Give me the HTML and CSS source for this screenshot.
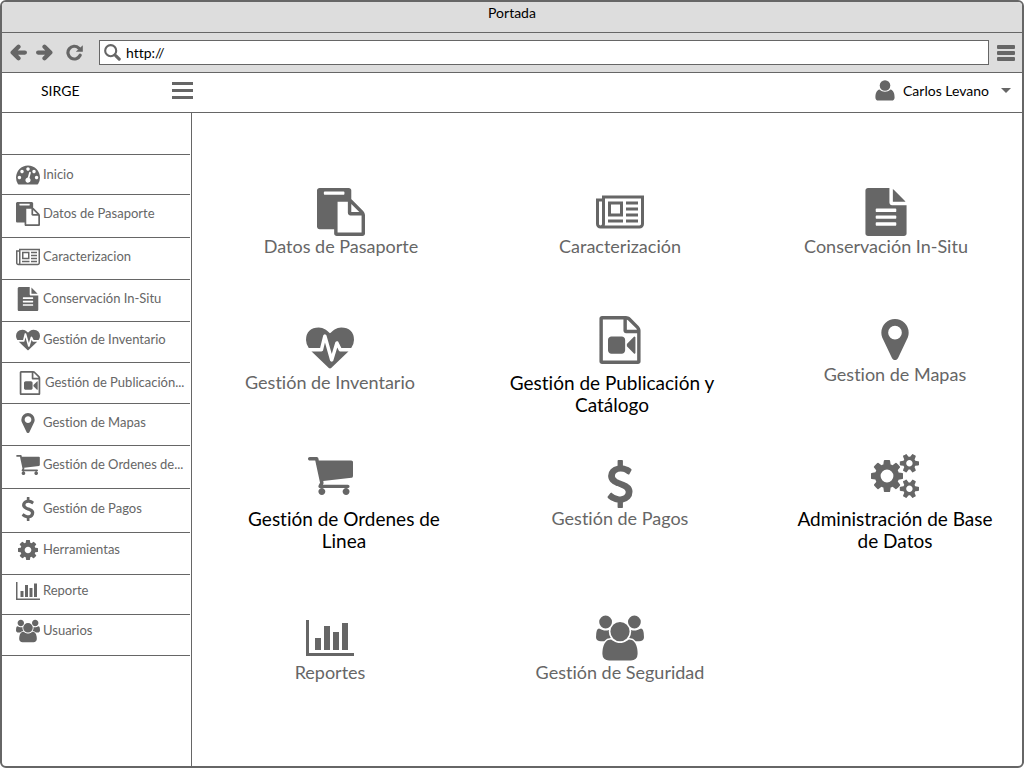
FILE: index.html
```
<!DOCTYPE html>
<html lang="es">
<head>
<meta charset="utf-8">
<meta name="viewport" content="width=device-width, initial-scale=1">
<title>Portada</title>
<link rel="stylesheet" href="styles.css">
</head>
<body>
<svg class="sprite" aria-hidden="true">
  <symbol id="dashboard" viewBox="0 256 1792 1408"><path d="M384 1152q0-53-37.500-90.500t-90.500-37.500-90.500 37.500-37.500 90.500 37.500 90.500 90.500 37.500 90.500-37.500 37.500-90.500zm192-448q0-53-37.500-90.500t-90.500-37.500-90.500 37.500-37.500 90.500 37.500 90.500 90.500 37.500 90.500-37.500 37.500-90.500zm428 481l101-382q6-26-7.500-48.500t-38.500-29.500-48 6.500-30 39.500l-101 382q-60 5-107 43.500t-63 98.500q-20 77 20 146t117 89 146-20 89-117q16-60-6-117t-72-91zm660-33q0-53-37.500-90.500t-90.500-37.500-90.500 37.500-37.500 90.500 37.500 90.500 90.500 37.500 90.500-37.500 37.500-90.500zm-640-640q0-53-37.500-90.500t-90.500-37.500-90.500 37.500-37.500 90.500 37.500 90.500 90.500 37.500 90.500-37.500 37.500-90.500zm448 192q0-53-37.500-90.500t-90.500-37.500-90.500 37.500-37.500 90.500 37.500 90.500 90.500 37.500 90.500-37.500 37.500-90.500zm320 448q0 261-141 483-19 29-54 29h-1402q-35 0-54-29-141-221-141-483 0-182 71-348t191-286 286-191 348-71 348 71 286 191 191 286 71 348z"/></symbol>
  <symbol id="paste" viewBox="0 0 1792 1792"><path d="M768 1664h896v-640h-416q-40 0-68-28t-28-68v-416h-384v1152zm256-1440v-64q0-13-9.500-22.500t-22.500-9.500h-704q-13 0-22.500 9.500t-9.500 22.500v64q0 13 9.500 22.500t22.500 9.500h704q13 0 22.500-9.500t9.500-22.500zm256 672h299l-299-299v299zm512 128v672q0 40-28 68t-68 28h-960q-40 0-68-28t-28-68v-160h-544q-40 0-68-28t-28-68v-1344q0-40 28-68t68-28h1088q40 0 68 28t28 68v328q21 13 36 28l408 408q28 28 48 76t20 88z"/></symbol>
  <symbol id="newspaper" viewBox="0 128 2048 1408"><path d="M1024 512h-384v384h384v-384zm128 640v128h-640v-128h640zm0-768v640h-640v-640h640zm640 768v128h-512v-128h512zm0-256v128h-512v-128h512zm0-256v128h-512v-128h512zm0-256v128h-512v-128h512zm-1536 960v-960h-128v960q0 26 19 45t45 19 45-19 19-45zm1664 0v-1088h-1536v1088q0 33-11 64h1483q26 0 45-19t19-45zm128-1216v1216q0 80-56 136t-136 56h-1664q-80 0-136-56t-56-136v-1088h256v-128h1792z"/></symbol>
  <symbol id="file-text" viewBox="128 0 1536 1792"><path d="M1596 476q14 14 28 36h-472v-472q22 14 36 28zm-476 164h544v1056q0 40-28 68t-68 28h-1344q-40 0-68-28t-28-68v-1600q0-40 28-68t68-28h800v544q0 40 28 68t68 28zm160 736v-64q0-14-9-23t-23-9h-704q-14 0-23 9t-9 23v64q0 14 9 23t23 9h704q14 0 23-9t9-23zm0-256v-64q0-14-9-23t-23-9h-704q-14 0-23 9t-9 23v64q0 14 9 23t23 9h704q14 0 23-9t9-23zm0-256v-64q0-14-9-23t-23-9h-704q-14 0-23 9t-9 23v64q0 14 9 23t23 9h704q14 0 23-9t9-23z"/></symbol>
  <symbol id="heartbeat" viewBox="0 0 1792 1536"><path d="M1280 896h305q-5 6-10 10.500t-9 7.500l-3 4-623 600q-18 18-44 18t-44-18l-624-602q-5-2-21-20h369q22 0 39.500-13.500t22.500-34.500l70-281 190 667q6 20 23 33t39 13q21 0 38-13t23-33l146-485 56 112q18 35 57 35zm512-428q0 145-103 300h-369l-111-221q-8-17-25.500-27t-36.500-8q-45 5-56 46l-129 430-196-686q-6-20-23.500-33t-39.500-13-39 13.500-22 34.500l-116 464h-423q-103-155-103-300 0-220 127-344t351-124q62 0 126.500 21.500t120 58 95.500 68.500 76 68q36-36 76-68t95.500-68.500 120-58 126.500-21.500q224 0 351 124t127 344z"/></symbol>
  <symbol id="file-video" viewBox="128 0 1536 1792"><path d="M1596 380q28 28 48 76t20 88v1152q0 40-28 68t-68 28h-1344q-40 0-68-28t-28-68v-1600q0-40 28-68t68-28h896q40 0 88 20t76 48zm-444-244v376h376q-10-29-22-41l-313-313q-12-12-41-22zm384 1528v-1024h-416q-40 0-68-28t-28-68v-416h-768v1536h1280zm-576-896q52 0 90 38t38 90v384q0 52-38 90t-90 38h-384q-52 0-90-38t-38-90v-384q0-52 38-90t90-38h384zm492 2q20 8 20 30v576q0 22-20 30-8 2-12 2-14 0-23-9l-265-266v-90l265-266q9-9 23-9 4 0 12 2z"/></symbol>
  <symbol id="map-marker" viewBox="384 128 1024 1536"><path d="M1152 640q0-106-75-181t-181-75-181 75-75 181 75 181 181 75 181-75 75-181zm256 0q0 109-33 179l-364 774q-16 33-47.500 52t-67.500 19-67.500-19-46.500-52l-365-774q-33-70-33-179 0-212 150-362t362-150 362 150 150 362z"/></symbol>
  <symbol id="cart" viewBox="64 256 1664 1408"><path d="M704 1536q0 52-38 90t-90 38-90-38-38-90 38-90 90-38 90 38 38 90zm896 0q0 52-38 90t-90 38-90-38-38-90 38-90 90-38 90 38 38 90zm128-1088v512q0 24-16.500 42.500t-40.500 21.500l-1044 122q13 60 13 70 0 16-24 64h920q26 0 45 19t19 45-19 45-45 19h-1024q-26 0-45-19t-19-45q0-11 8-31.500t16-36 21.500-40 15.500-29.500l-177-823h-204q-26 0-45-19t-19-45 19-45 45-19h256q16 0 28.500 6.500t19.500 15.500 13 24.500 8 26 5.500 29.500 4.500 26h1201q26 0 45 19t19 45z"/></symbol>
  <symbol id="dollar" viewBox="420 0 950 1792"><path d="M1362 1185q0 153-99.500 263.500t-258.500 136.500v175q0 14-9 23t-23 9h-135q-13 0-22.500-9.500t-9.500-22.500v-175q-66-9-127.500-31t-101.500-44.500-74-48-46.500-37.500-17.500-18q-17-21-2-41l103-135q7-10 23-12 15-2 24 9l2 2q113 99 243 125 37 8 74 8 81 0 142.500-43t61.500-122q0-28-15-53t-33.500-42-58.500-37.500-66-32-80-32.500q-39-16-61.500-25t-61.500-26.500-62.500-31-56.500-35.500-53.500-42.500-43.500-49-35.500-58-21-66.500-8.500-78q0-138 98-242t255-134v-180q0-13 9.500-22.500t22.500-9.500h135q14 0 23 9t9 23v176q57 6 110.500 23t87 33.500 63.500 37.500 39 29 15 14q17 18 5 38l-81 146q-8 15-23 16-14 3-27-7-3-3-14.500-12t-39-26.500-58.500-32-74.500-26-85.500-11.500q-95 0-155 43t-60 111q0 26 8.500 48t29.500 41.500 39.500 33 56 31 60.500 27 70 27.500q53 20 81 31.500t76 35 75.500 42.500 62 50 53 63.500 31.500 76.500 13 94z"/></symbol>
  <symbol id="cog" viewBox="128 128 1536 1536"><path d="M1152 896q0-106-75-181t-181-75-181 75-75 181 75 181 181 75 181-75 75-181zm512-109v222q0 12-8 23t-20 13l-185 28q-19 54-39 91 35 50 107 138 10 12 10 25t-9 23q-27 37-99 108t-94 71q-12 0-26-9l-138-108q-44 23-91 38-16 136-29 186-7 28-36 28h-222q-14 0-24.500-8.500t-11.500-21.500l-28-184q-49-16-90-37l-141 107q-10 9-25 9-14 0-25-11-126-114-165-168-7-10-7-23 0-12 8-23 15-21 51-66.500t54-70.500q-27-50-41-99l-183-27q-13-2-21-12.500t-8-23.500v-222q0-12 8-23t19-13l186-28q14-46 39-92-40-57-107-138-10-12-10-24 0-10 9-23 26-36 98.500-107.500t94.500-71.500q13 0 26 10l138 107q44-23 91-38 16-136 29-186 7-28 36-28h222q14 0 24.500 8.500t11.500 21.500l28 184q49 16 90 37l142-107q9-9 24-9 13 0 25 10 129 119 165 170 7 8 7 22 0 12-8 23-15 21-51 66.500t-54 70.500q26 50 41 98l183 28q13 2 21 12.500t8 23.500z"/></symbol>
  <symbol id="cogs" viewBox="0 15 1920 1762"><path d="M896 896q0-106-75-181t-181-75-181 75-75 181 75 181 181 75 181-75 75-181zm768 512q0-52-38-90t-90-38-90 38-38 90q0 53 37.500 90.500t90.500 37.500 90.500-37.500 37.500-90.500zm0-1024q0-52-38-90t-90-38-90 38-38 90q0 53 37.500 90.500t90.500 37.500 90.500-37.500 37.500-90.500zm-384 421v185q0 10-7 19.500t-16 10.500l-155 24q-11 35-32 76 34 48 90 115 7 11 7 20 0 12-7 19-23 30-82.500 89.500t-78.500 59.500q-11 0-21-7l-115-90q-37 19-77 31-11 108-23 155-7 24-30 24h-186q-11 0-20-7.500t-10-17.500l-23-153q-34-10-75-31l-118 89q-7 7-20 7-11 0-21-8-144-133-144-160 0-9 7-19 10-14 41-53t47-61q-23-44-35-82l-152-24q-10-1-17-9.500t-7-19.500v-185q0-10 7-19.500t16-10.500l155-24q11-35 32-76-34-48-90-115-7-11-7-20 0-12 7-20 22-30 82-89t79-59q11 0 21 7l115 90q34-18 77-32 11-108 23-154 7-24 30-24h186q11 0 20 7.500t10 17.500l23 153q34 10 75 31l118-89q8-7 20-7 11 0 21 8 144 133 144 160 0 8-7 19-12 16-42 54t-45 60q23 48 34 82l152 23q10 2 17 10.500t7 19.500zm640 533v140q0 16-149 31-12 27-30 52 51 113 51 138 0 4-4 7-122 71-124 71-8 0-46-47t-52-68q-20 2-30 2t-30-2q-14 21-52 68t-46 47q-2 0-124-71-4-3-4-7 0-25 51-138-18-25-30-52-149-15-149-31v-140q0-16 149-31 13-29 30-52-51-113-51-138 0-4 4-7 4-2 35-20t59-34 30-16q8 0 46 46.500t52 67.500q20-2 30-2t30 2q51-71 92-112l6-2q4 0 124 70 4 3 4 7 0 25-51 138 17 23 30 52 149 15 149 31zm0-1024v140q0 16-149 31-12 27-30 52 51 113 51 138 0 4-4 7-122 71-124 71-8 0-46-47t-52-68q-20 2-30 2t-30-2q-14 21-52 68t-46 47q-2 0-124-71-4-3-4-7 0-25 51-138-18-25-30-52-149-15-149-31v-140q0-16 149-31 13-29 30-52-51-113-51-138 0-4 4-7 4-2 35-20t59-34 30-16q8 0 46 46.500t52 67.500q20-2 30-2t30 2q51-71 92-112l6-2q4 0 124 70 4 3 4 7 0 25-51 138 17 23 30 52 149 15 149 31z"/></symbol>
  <symbol id="chart" viewBox="0 128 2048 1536"><path d="M640 896v512h-256v-512h256zm384-512v1024h-256v-1024h256zm1024 1152v128h-2048v-1536h128v1408h1920zm-640-896v768h-256v-768h256zm384-384v1152h-256v-1152h256z"/></symbol>
  <symbol id="users" viewBox="0 0 1920 1792"><path d="M593 896q-162 5-265 128h-134q-82 0-138-40.500t-56-118.500q0-353 124-353 6 0 43.500 21t97.500 42.500 119 21.500q67 0 133-23-5 37-5 66 0 135 81 256zm1071 637q0 120-73 189.500t-194 69.500h-874q-121 0-194-69.500t-73-189.500q0-53 3.500-103.500t14-109 26.500-108.500 43-97.500 62-81 85.500-53.500 111.500-20q10 0 43 21.500t73 48 107 48 135 21.500 135-21.500 107-48 73-48 43-21.500q61 0 111.500 20t85.500 53.500 62 81 43 97.500 26.500 108.500 14 109 3.500 103.500zm-1024-1277q0 106-75 181t-181 75-181-75-75-181 75-181 181-75 181 75 75 181zm704 384q0 159-112.500 271.500t-271.500 112.500-271.500-112.500-112.500-271.500 112.500-271.500 271.500-112.500 271.500 112.500 112.500 271.500zm576 225q0 78-56 118.500t-138 40.500h-134q-103-123-265-128 81-121 81-256 0-29-5-66 66 23 133 23 59 0 119-21.500t97.500-42.500 43.500-21q124 0 124 353zm-128-609q0 106-75 181t-181 75-181-75-75-181 75-181 181-75 181 75 75 181z"/></symbol>
  <symbol id="user" viewBox="0 0 20 21"><circle cx="10" cy="5.500" r="5.300"/><path d="M4.600 9.600C6 11 8 11.800 10 11.800S14 11 15.400 9.600C18.400 10.200 19.600 13.500 19.600 17.500C19.600 19.600 18.400 20.600 16.800 20.600H3.200C1.600 20.600 .4 19.600 .4 17.500C.4 13.500 1.600 10.200 4.600 9.600Z"/></symbol>
  <symbol id="arrow" viewBox="0 0 16 16"><path class="stroke" d="M2.500 8H14M8 2.500L2.500 8L8 13.500"/></symbol>
  <symbol id="reload" viewBox="0 0 16 16"><path class="stroke-thin" d="M13.300 10.600A6 6 0 1 1 12 3.800"/><path d="M15.800 1.200V7.400H9.200Z"/></symbol>
  <symbol id="search" viewBox="0 0 16 16"><circle class="stroke-lens" cx="6.300" cy="6.300" r="5.200"/><path class="stroke-thin" d="M11 11L14.300 14.200"/></symbol>
  <symbol id="menu" viewBox="0 0 18 16"><path d="M1 0h16a1 1 0 0 1 1 1v2a1 1 0 0 1-1 1H1a1 1 0 0 1-1-1V1a1 1 0 0 1 1-1zm0 6h16a1 1 0 0 1 1 1v2a1 1 0 0 1-1 1H1a1 1 0 0 1-1-1V7a1 1 0 0 1 1-1zm0 6h16a1 1 0 0 1 1 1v2a1 1 0 0 1-1 1H1a1 1 0 0 1-1-1v-2a1 1 0 0 1 1-1z"/></symbol>
  <symbol id="bars" viewBox="0 0 21 17"><path d="M0 0h21v3H0zM0 7h21v3H0zM0 14h21v3H0z"/></symbol>
</svg>

<div class="window">
  <div class="titlebar">Portada</div>
  <div class="toolbar">
    <div class="nav-buttons">
      <button class="icon-button" aria-label="Atrás"><svg class="icon-nav"><use href="#arrow"/></svg></button>
      <button class="icon-button" aria-label="Adelante"><svg class="icon-nav flip"><use href="#arrow"/></svg></button>
      <button class="icon-button reload" aria-label="Recargar"><svg class="icon-nav"><use href="#reload"/></svg></button>
    </div>
    <label class="address">
      <svg class="icon-nav"><use href="#search"/></svg>
      <input class="address-input" type="text" value="http://" aria-label="Dirección">
    </label>
    <button class="icon-button" aria-label="Menú del navegador"><svg class="icon-menu"><use href="#menu"/></svg></button>
  </div>

  <header class="app-header">
    <div class="brand">SIRGE</div>
    <button class="icon-button" aria-label="Mostrar menú"><svg class="icon-bars"><use href="#bars"/></svg></button>
    <button class="account">
      <svg class="icon-user"><use href="#user"/></svg>
      <span>Carlos Levano</span>
      <span class="caret"></span>
    </button>
  </header>

  <div class="body">
    <nav class="sidebar">
      <ul class="menu">
        <li class="menu-item"><a class="menu-link level" href="#"><svg class="icon-side"><use href="#dashboard"/></svg><span class="menu-text">Inicio</span></a></li>
        <li class="menu-item"><a class="menu-link" href="#"><svg class="icon-side"><use href="#paste"/></svg><span class="menu-text">Datos de Pasaporte</span></a></li>
        <li class="menu-item"><a class="menu-link" href="#"><svg class="icon-side"><use href="#newspaper"/></svg><span class="menu-text">Caracterizacion</span></a></li>
        <li class="menu-item"><a class="menu-link" href="#"><svg class="icon-side"><use href="#file-text"/></svg><span class="menu-text">Conservación In-Situ</span></a></li>
        <li class="menu-item"><a class="menu-link" href="#"><svg class="icon-side"><use href="#heartbeat"/></svg><span class="menu-text">Gestión de Inventario</span></a></li>
        <li class="menu-item"><a class="menu-link level indent" href="#"><svg class="icon-side"><use href="#file-video"/></svg><span class="menu-text">Gestión de Publicación...</span></a></li>
        <li class="menu-item"><a class="menu-link" href="#"><svg class="icon-side icon-side-short"><use href="#map-marker"/></svg><span class="menu-text">Gestion de Mapas</span></a></li>
        <li class="menu-item"><a class="menu-link" href="#"><svg class="icon-side icon-side-short"><use href="#cart"/></svg><span class="menu-text">Gestión de Ordenes de...</span></a></li>
        <li class="menu-item"><a class="menu-link" href="#"><svg class="icon-side"><use href="#dollar"/></svg><span class="menu-text">Gestión de Pagos</span></a></li>
        <li class="menu-item"><a class="menu-link raised" href="#"><svg class="icon-side icon-side-short"><use href="#cog"/></svg><span class="menu-text">Herramientas</span></a></li>
        <li class="menu-item"><a class="menu-link raised" href="#"><svg class="icon-side"><use href="#chart"/></svg><span class="menu-text">Reporte</span></a></li>
        <li class="menu-item"><a class="menu-link raised" href="#"><svg class="icon-side"><use href="#users"/></svg><span class="menu-text">Usuarios</span></a></li>
      </ul>
    </nav>

    <main class="board">
      <div class="row row-first">
        <a class="tile" href="#"><svg class="icon-tile"><use href="#paste"/></svg><span>Datos de Pasaporte</span></a>
        <a class="tile" href="#"><svg class="icon-tile"><use href="#newspaper"/></svg><span>Caracterización</span></a>
        <a class="tile" href="#"><svg class="icon-tile"><use href="#file-text"/></svg><span>Conservación In-Situ</span></a>
      </div>
      <div class="row">
        <a class="tile lowered" href="#"><svg class="icon-tile"><use href="#heartbeat"/></svg><span>Gestión de Inventario</span></a>
        <a class="tile" href="#"><svg class="icon-tile"><use href="#file-video"/></svg><span class="strong-label lean-left">Gestión de Publicación y Catálogo</span></a>
        <a class="tile" href="#"><svg class="icon-tile icon-tile-short"><use href="#map-marker"/></svg><span>Gestion de Mapas</span></a>
      </div>
      <div class="row">
        <a class="tile" href="#"><svg class="icon-tile icon-tile-cart"><use href="#cart"/></svg><span class="strong-label lean-right">Gestión de Ordenes de Linea</span></a>
        <a class="tile lowered" href="#"><svg class="icon-tile"><use href="#dollar"/></svg><span>Gestión de Pagos</span></a>
        <a class="tile" href="#"><svg class="icon-tile"><use href="#cogs"/></svg><span class="strong-label">Administración de Base de Datos</span></a>
      </div>
      <div class="row">
        <a class="tile" href="#"><svg class="icon-tile"><use href="#chart"/></svg><span>Reportes</span></a>
        <a class="tile" href="#"><svg class="icon-tile"><use href="#users"/></svg><span>Gestión de Seguridad</span></a>
      </div>
    </main>
  </div>
</div>
</body>
</html>
```

FILE: styles.css
```
* {
  box-sizing: border-box;
}

body {
  margin: 0;
  background: #fff;
  color: #000;
  font-family: Lato, "Open Sans", sans-serif;
  font-size: 14px;
  font-variant-ligatures: none;
  line-height: 20px;
}

a {
  color: inherit;
  text-decoration: none;
}

button,
input {
  padding: 0;
  border: 0;
  background: none;
  color: inherit;
  font: inherit;
}

svg {
  display: block;
  flex: none;
  fill: #666;
}

.sprite {
  position: absolute;
  width: 0;
  height: 0;
}

.stroke,
.stroke-thin,
.stroke-lens {
  fill: none;
  stroke: #666;
  stroke-width: 4;
  stroke-linecap: round;
  stroke-linejoin: round;
}

.stroke-thin {
  stroke-width: 3;
}

.stroke-lens {
  stroke-width: 2;
}

.window {
  display: flex;
  flex-direction: column;
  min-height: 100vh;
  border: 2px solid #666;
  border-radius: 6px;
  overflow: hidden;
}

.titlebar {
  height: 31px;
  padding-top: 1px;
  border-bottom: 1px solid #666;
  background: #ddd;
  text-align: center;
}

.toolbar {
  display: flex;
  align-items: center;
  height: 40px;
  padding: 0 7px 0 8px;
  gap: 8px;
  border-bottom: 1px solid #666;
  background: #ddd;
}

.nav-buttons {
  display: flex;
  gap: 9px;
  width: 81px;
}

.reload {
  margin-left: 4px;
}

.icon-nav {
  width: 17px;
  height: 17px;
}

.flip {
  transform: scaleX(-1);
}

.address {
  display: flex;
  flex: 1;
  align-items: center;
  gap: 5px;
  height: 25px;
  padding: 0 4px;
  border: 1px solid #666;
  background: #fff;
}

.address-input {
  flex: 1;
  min-width: 0;
  outline: 0;
}

.icon-menu {
  width: 18px;
  height: 16px;
}

.app-header {
  display: flex;
  align-items: center;
  height: 40px;
  padding: 0 11px 4px 39px;
  border-bottom: 1px solid #666;
}

.brand {
  width: 131px;
}

.icon-bars {
  width: 21px;
  height: 17px;
}

.account {
  display: flex;
  align-items: center;
  gap: 8px;
  margin-left: auto;
}

.icon-user {
  width: 20px;
  height: 21px;
}

.caret {
  margin-left: 4px;
  border: 5px solid transparent;
  border-top-color: #666;
  border-bottom: 0;
}

.body {
  display: flex;
  flex: 1;
}

.sidebar {
  width: 190px;
  padding: 41px 1px 0 0;
  border-right: 1px solid #666;
}

.menu {
  display: grid;
  grid-template-rows: 40px 43px 42px 42px 41px 41px 42px 43px 44px 42px 40px 41px;
  margin: 0;
  padding: 0;
  border-top: 1px solid #666;
  font-size: 13px;
  list-style: none;
}

.menu-item {
  min-width: 0;
  border-bottom: 1px solid #666;
}

.menu-link {
  display: flex;
  align-items: center;
  gap: 3px;
  height: 100%;
  padding: 0 0 4px 14px;
  color: #666;
}

.level {
  padding-bottom: 0;
}

.indent {
  padding-left: 16px;
}

.raised {
  padding-bottom: 8px;
}

.menu-text {
  padding-bottom: 2px;
  white-space: nowrap;
}

.icon-side {
  width: 24px;
  height: 24px;
}

.icon-side-short {
  height: 20px;
}

.board {
  display: grid;
  flex: 1;
  grid-template-rows: 128px 136px 162px auto;
  padding-top: 75px;
}

.row {
  display: grid;
  grid-template-columns: 276fr 304fr 246fr;
  align-items: start;
  padding-right: 4px;
}

.row-first {
  grid-template-columns: 298fr 260fr 272fr;
  padding-right: 0;
}

.tile {
  display: flex;
  flex-direction: column;
  align-items: center;
  color: #666;
  font-size: 18px;
  line-height: 20px;
  text-align: center;
}

.lowered {
  padding-top: 8px;
}

.strong-label {
  box-sizing: content-box;
  max-width: 208px;
  padding-top: 8px;
  color: #000;
  font-size: 19px;
  line-height: 22px;
}

.lean-left {
  padding-right: 16px;
}

.lean-right {
  padding-left: 28px;
}

.icon-tile {
  width: 48px;
  height: 48px;
}

.icon-tile-short {
  height: 41px;
  margin: 3px 0 4px;
}

.icon-tile-cart {
  width: 45px;
}
```
